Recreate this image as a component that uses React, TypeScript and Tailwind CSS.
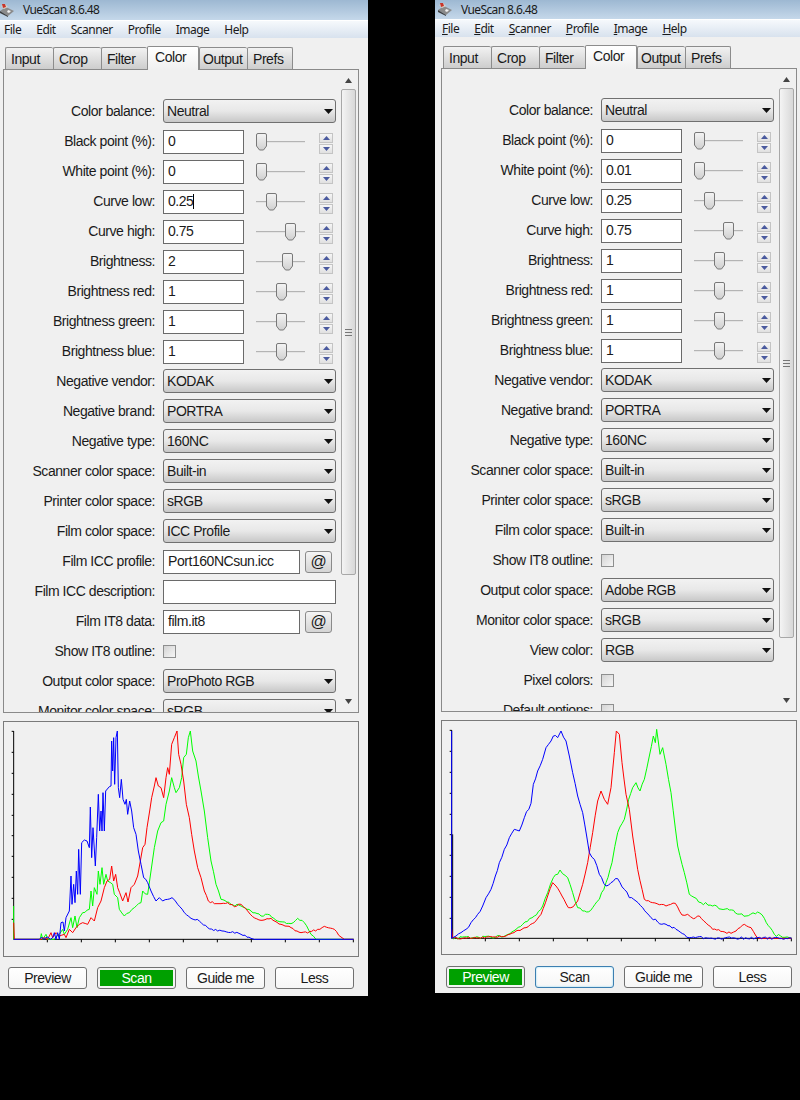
import React from 'react';

type Row =
  | { label: string; kind: 'select'; value: string }
  | { label: string; kind: 'num'; value: string; pos: number; caret?: boolean }
  | { label: string; kind: 'file'; value: string }
  | { label: string; kind: 'wide'; value: string }
  | { label: string; kind: 'check' };

const leftRows: Row[] = [
  { label: 'Color balance:', kind: 'select', value: 'Neutral' },
  { label: 'Black point (%):', kind: 'num', value: '0', pos: 5 },
  { label: 'White point (%):', kind: 'num', value: '0', pos: 5 },
  { label: 'Curve low:', kind: 'num', value: '0.25', pos: 15, caret: true },
  { label: 'Curve high:', kind: 'num', value: '0.75', pos: 34 },
  { label: 'Brightness:', kind: 'num', value: '2', pos: 31 },
  { label: 'Brightness red:', kind: 'num', value: '1', pos: 25 },
  { label: 'Brightness green:', kind: 'num', value: '1', pos: 25 },
  { label: 'Brightness blue:', kind: 'num', value: '1', pos: 25 },
  { label: 'Negative vendor:', kind: 'select', value: 'KODAK' },
  { label: 'Negative brand:', kind: 'select', value: 'PORTRA' },
  { label: 'Negative type:', kind: 'select', value: '160NC' },
  { label: 'Scanner color space:', kind: 'select', value: 'Built-in' },
  { label: 'Printer color space:', kind: 'select', value: 'sRGB' },
  { label: 'Film color space:', kind: 'select', value: 'ICC Profile' },
  { label: 'Film ICC profile:', kind: 'file', value: 'Port160NCsun.icc' },
  { label: 'Film ICC description:', kind: 'wide', value: '' },
  { label: 'Film IT8 data:', kind: 'file', value: 'film.it8' },
  { label: 'Show IT8 outline:', kind: 'check' },
  { label: 'Output color space:', kind: 'select', value: 'ProPhoto RGB' },
  { label: 'Monitor color space:', kind: 'select', value: 'sRGB' },
];

const rightRows: Row[] = [
  { label: 'Color balance:', kind: 'select', value: 'Neutral' },
  { label: 'Black point (%):', kind: 'num', value: '0', pos: 5 },
  { label: 'White point (%):', kind: 'num', value: '0.01', pos: 5 },
  { label: 'Curve low:', kind: 'num', value: '0.25', pos: 15 },
  { label: 'Curve high:', kind: 'num', value: '0.75', pos: 34 },
  { label: 'Brightness:', kind: 'num', value: '1', pos: 25 },
  { label: 'Brightness red:', kind: 'num', value: '1', pos: 25 },
  { label: 'Brightness green:', kind: 'num', value: '1', pos: 25 },
  { label: 'Brightness blue:', kind: 'num', value: '1', pos: 25 },
  { label: 'Negative vendor:', kind: 'select', value: 'KODAK' },
  { label: 'Negative brand:', kind: 'select', value: 'PORTRA' },
  { label: 'Negative type:', kind: 'select', value: '160NC' },
  { label: 'Scanner color space:', kind: 'select', value: 'Built-in' },
  { label: 'Printer color space:', kind: 'select', value: 'sRGB' },
  { label: 'Film color space:', kind: 'select', value: 'Built-in' },
  { label: 'Show IT8 outline:', kind: 'check' },
  { label: 'Output color space:', kind: 'select', value: 'Adobe RGB' },
  { label: 'Monitor color space:', kind: 'select', value: 'sRGB' },
  { label: 'View color:', kind: 'select', value: 'RGB' },
  { label: 'Pixel colors:', kind: 'check' },
  { label: 'Default options:', kind: 'check' },
];

// histogram traces, in 3x coordinates of the window
const leftBlue = '38,655 115,655 122,648 128,655 140,648 148,655 155,650 160,635 165,655 170,635 175,655 180,605 186,603 190,630 195,590 205,570 210,465 213,550 218,490 222,545 226,450 230,520 233,385 238,520 242,365 250,357 258,360 265,380 268,258 272,410 276,320 283,435 287,350 292,220 296,330 300,270 303,330 306,215 310,330 314,210 325,197 330,195 332,60 335,150 338,50 341,190 345,50 349,30 352,200 356,230 361,175 366,235 372,250 376,235 380,280 386,240 392,270 398,320 405,340 412,390 420,430 428,470 440,485 450,510 465,540 475,530 485,540 500,535 513,530 530,550 550,575 570,592 595,600 620,620 650,630 695,632 720,640 750,652 760,655 1058,655';
const leftRed = '38,605 40,655 120,655 130,650 140,655 150,635 155,650 165,635 175,645 190,640 195,650 205,625 215,635 225,620 235,610 245,605 260,610 270,590 280,600 290,560 300,540 310,500 318,480 326,475 332,435 338,480 344,460 350,500 356,515 365,540 375,515 381,543 390,500 400,490 410,465 418,420 425,380 432,370 438,320 446,270 452,230 460,195 465,170 472,195 480,200 488,230 495,170 500,140 505,160 512,70 520,50 528,30 533,100 540,130 548,180 556,250 565,290 572,340 580,390 590,440 600,470 610,510 622,540 640,548 660,548 680,545 700,557 720,550 740,570 755,587 780,598 810,592 840,610 870,620 900,635 920,636 950,625 970,616 1000,625 1020,648 1030,655 1058,655';
const leftGreen = '38,555 38,655 118,655 121,638 125,655 135,640 140,655 160,655 175,640 185,625 190,640 200,625 210,590 215,620 222,585 228,620 235,590 245,575 265,565 270,510 275,555 280,500 288,520 292,450 297,490 303,440 308,490 315,460 320,480 335,490 340,520 350,530 355,565 370,585 385,575 400,560 420,545 425,510 440,520 450,450 460,380 470,330 480,305 488,300 495,250 505,210 512,170 520,200 525,215 535,200 542,170 548,110 556,100 562,50 568,30 575,90 585,120 592,165 600,210 610,270 620,350 630,420 645,490 660,535 690,550 720,555 750,570 780,585 800,580 830,600 850,603 870,608 890,592 910,605 930,640 945,655 1058,655';

const rightBlue = '47,45 47,667 60,660 75,650 90,640 105,620 125,595 140,570 150,545 165,520 178,480 190,440 205,400 220,365 235,340 250,345 265,305 285,262 292,205 305,165 320,130 330,95 345,75 352,60 365,65 375,45 390,75 400,120 410,170 425,240 440,290 452,360 460,410 475,430 490,475 510,510 525,500 545,488 565,520 580,545 600,555 620,575 645,605 665,618 690,625 720,640 745,655 760,665 1067,667';
const rightRed = '47,640 50,667 170,663 210,660 240,645 270,635 295,620 315,595 335,540 350,500 360,510 378,540 397,575 412,572 425,555 440,505 455,440 470,350 485,255 495,225 505,250 515,265 525,215 535,110 541,45 550,55 558,140 570,235 580,280 590,360 605,460 625,550 650,560 690,570 718,562 738,597 755,595 772,608 790,600 830,640 885,652 900,645 925,625 945,635 960,660 972,667 1067,667';
const rightGreen = '47,667 110,665 165,664 210,658 240,640 260,625 295,600 320,570 335,530 352,485 365,475 372,462 395,485 410,530 425,575 440,585 452,588 470,575 490,550 510,500 528,440 545,350 565,310 578,250 590,215 600,200 612,225 625,190 640,120 652,60 658,80 662,40 672,115 680,95 690,145 705,230 725,390 745,470 760,535 795,560 830,570 880,582 930,600 965,588 985,607 1015,655 1040,664 1067,667';

// the real traces are noisy, roughen the hand-read points a little
function rough(points: string, amp: number): string {
  const pts = points.split(' ').map((p) => p.split(',').map(Number));
  const out: string[] = [];
  pts.forEach((p, i) => {
    out.push(`${p[0]},${p[1]}`);
    const q = pts[i + 1];
    if (!q || p[1] === q[1]) return;
    const n = Math.floor((q[0] - p[0]) / 6);
    for (let k = 1; k < n; k++) {
      const x = p[0] + ((q[0] - p[0]) * k) / n;
      const y = p[1] + ((q[1] - p[1]) * k) / n;
      const noise = Math.sin(x * 12.9898 + y * 0.2) * 43758.5453;
      out.push(`${x.toFixed(1)},${(y + (noise - Math.floor(noise) - 0.5) * amp).toFixed(1)}`);
    }
  });
  return out.join(' ');
}

const ticksY = [31, 94, 157, 220, 283, 344, 406, 469, 532, 595];
const ticksX = [139, 241, 343, 445, 547, 649, 751, 853, 955, 1057];

function Select({ value }: { value: string }) {
  return (
    <div className="flex-1 h-[24px] flex items-center justify-between pl-[3px] pr-[2px] border border-[#707070] rounded-[3px] bg-gradient-to-b from-[#f2f2f2] via-[#e8e8e8] to-[#c8c8c8]">
      <span>{value}</span>
      <svg width="9" height="5" viewBox="0 0 9 5"><path d="M0 0h9L4.500 5z" fill="#111" /></svg>
    </div>
  );
}

function TextBox({ value, width, caret }: { value: string; width: string; caret?: boolean }) {
  return (
    <div className={`h-[24px] mt-[2px] pb-[2px] bg-white border border-[#6a6a6a] pl-[4px] flex items-center ${width}`}>
      {value}
      {caret && <span className="w-px h-[15px] bg-black" />}
    </div>
  );
}

function Spinner() {
  return (
    <div className="w-[14px] mt-[4px] flex flex-col gap-px">
      <div className="h-[10px] flex items-center justify-center border border-[#c4c4c4] bg-gradient-to-b from-[#f6f6f6] to-[#e0e0e0]">
        <svg width="7" height="4" viewBox="0 0 7 4"><path d="M3.500 0L7 4H0z" fill="#4a5a9e" /></svg>
      </div>
      <div className="h-[10px] flex items-center justify-center border border-[#c4c4c4] bg-gradient-to-b from-[#f6f6f6] to-[#e0e0e0]">
        <svg width="7" height="4" viewBox="0 0 7 4"><path d="M0 0h7L3.500 4z" fill="#4a5a9e" /></svg>
      </div>
    </div>
  );
}

function Slider({ pos }: { pos: number }) {
  return (
    <div className="relative w-[49px] h-[20px] ml-[12px] mr-[14px]">
      <div className="absolute left-0 right-0 top-[10px] h-[2px] bg-[#b4b4b4] border-b border-[#e4e4e4]" />
      <svg className="absolute top-[2px]" style={{ left: pos - 5 }} width="11" height="18" viewBox="0 0 11 18">
        <defs>
          <linearGradient id="thumb" x1="0" y1="0" x2="0" y2="1">
            <stop offset="0" stopColor="#f4f4f4" />
            <stop offset="1" stopColor="#d0d0d0" />
          </linearGradient>
        </defs>
        <path d="M2 .5h7a1.500 1.500 0 0 1 1.500 1.500v11l-3 4h-4l-3-4v-11a1.500 1.500 0 0 1 1.500-1.500z" fill="url(#thumb)" stroke="#787878" />
      </svg>
    </div>
  );
}

function AtButton() {
  return (
    <div className="w-[27px] h-[22px] ml-[5px] mt-[2px] flex items-center justify-center border border-[#8a8a8a] rounded-[3px] bg-gradient-to-b from-[#f4f4f4] to-[#d4d4d4] text-[16px]">
      @
    </div>
  );
}

function Control({ row }: { row: Row }) {
  switch (row.kind) {
    case 'select':
      return <Select value={row.value} />;
    case 'num':
      return (
        <>
          <TextBox value={row.value} width="w-[81px]" caret={row.caret} />
          <Slider pos={row.pos} />
          <Spinner />
        </>
      );
    case 'file':
      return (
        <>
          <TextBox value={row.value} width="w-[137px]" />
          <AtButton />
        </>
      );
    case 'wide':
      return <TextBox value={row.value} width="flex-1" />;
    case 'check':
      return <div className="w-[13px] h-[13px] border border-[#8e8f8f] bg-gradient-to-br from-[#d4d4d4] to-[#f6f6f6]" />;
  }
}

function Histogram({ blue, red, green, right }: { blue: string; red: string; green: string; right: boolean }) {
  const baseY = right ? 667 : 655;
  const x0 = right ? 47 : 38;
  const ticks = right ? ticksY.map((y) => y + 12) : ticksY;
  return (
    <div className={`mt-[8px] ml-[3px] w-[356px] border border-[#7a7a7a] ${right ? 'h-[235px]' : 'h-[236px]'}`}>
      <svg className="block w-full h-full" viewBox={`${x0 - 29} ${baseY - 652} 1062 ${right ? 699 : 702}`} preserveAspectRatio="none">
        <g fill="none" stroke="#000" strokeWidth="3">
          <path d={`M${x0} ${baseY - 625}V${baseY}H${x0 + 1020}`} />
          {ticks.map((y) => <path key={y} d={`M${x0 - 6} ${y}h6`} />)}
          {ticksX.map((x) => <path key={x} d={`M${x + x0 - 38} ${baseY}v9`} />)}
          {right && <path d={`M${x0 + 3} 355V${baseY}`} />}
        </g>
        <g fill="none" strokeWidth="3" strokeLinejoin="round">
          <polyline points={rough(green, right ? 9 : 7)} stroke="#00ff00" />
          <polyline points={rough(red, right ? 6 : 7)} stroke="#ff0000" />
          <polyline points={rough(blue, right ? 9 : 6)} stroke="#0000ff" />
        </g>
      </svg>
    </div>
  );
}

function Btn({ label, green, focus }: { label: string; green?: boolean; focus?: boolean }) {
  if (green) {
    return (
      <div className="w-[79px] h-[22px] p-[2px] border border-[#707070] rounded-[3px] bg-[#f4f4f4]">
        <div className="h-full flex items-center justify-center bg-[#00a000] text-white">{label}</div>
      </div>
    );
  }
  return (
    <div className={`w-[79px] h-[22px] flex items-center justify-center rounded-[3px] border bg-gradient-to-b from-white to-[#f6f6f6] ${focus ? 'border-[#3c7fb1] shadow-[inset_0_0_2px_#7fd0f0]' : 'border-[#707070]'}`}>
      {label}
    </div>
  );
}

function Logo() {
  return (
    <svg width="15" height="15" viewBox="0 0 15 15" className="shrink-0">
      <path d="M0 8L6 4l8 4-6 5z" fill="#8b8b8b" />
      <path d="M0 8l8 5v1L0 10z" fill="#3d3d3d" />
      <path d="M1 3l4-2 3 3-4 2z" fill="#d8d4c8" />
      <path d="M2 1l3 0 1 3-3 1z" fill="#c8352a" />
      <path d="M8 7l3 1-2 2-2-1z" fill="#f2f2f2" />
    </svg>
  );
}

const menus = ['File', 'Edit', 'Scanner', 'Profile', 'Image', 'Help'];
const tabs = [
  { name: 'Input', cls: 'w-[48px] pl-[5px]' },
  { name: 'Crop', cls: 'w-[48px] pl-[5px]' },
  { name: 'Filter', cls: 'w-[46px] pl-[5px]' },
  { name: 'Color', cls: 'w-[52px] pl-[7px]' },
  { name: 'Output', cls: 'w-[48px] pl-[3px]' },
  { name: 'Prefs', cls: 'w-[46px] pl-[5px]' },
];

function VueWindow({ side }: { side: 'left' | 'right' }) {
  const right = side === 'right';
  const rows = right ? rightRows : leftRows;
  return (
    <div className={`overflow-hidden bg-[#f0f0f0] shrink-0 ${right ? 'w-[365px] h-[993px] ml-[67px]' : 'w-[368px] h-[996px]'}`}>
      <div className={`flex items-center gap-[8px] bg-gradient-to-b from-[#9db8d2] to-[#c5d8ea] font-['Noto_Sans',sans-serif] text-[12px] tracking-[-0.6px] text-[#1a1a1a] ${right ? 'pl-[3px] h-[19px]' : 'h-[20px]'}`}>
        <Logo />
        <span>VueScan 8.6.48</span>
      </div>
      <div className={`h-[18px] pt-[1px] flex items-center gap-[15px] font-['Noto_Sans',sans-serif] text-[12px] tracking-[-0.5px] border-t border-white bg-gradient-to-b from-[#f6f9fc] to-[#d8e2ee] ${right ? 'pl-[7px]' : 'pl-[4px]'}`}>
        {menus.map((m) => (
          <span key={m}>
            {right ? <><span className="underline">{m[0]}</span>{m.slice(1)}</> : m}
          </span>
        ))}
      </div>
      <div className={right ? 'w-[371px] pl-[3px]' : 'w-[368px]'}>
        <div className="flex items-end h-[31px] pl-[5px] relative z-10">
          {tabs.map((t) => (
            t.name === 'Color' ? (
              <div key={t.name} className={`${t.cls} h-[24px] pb-[2px] -mb-px flex items-center border border-b-0 border-[#8c8c8c] rounded-t-[2px] bg-gradient-to-b from-white to-[#f0f0f0]`}>{t.name}</div>
            ) : (
              <div key={t.name} className={`${t.cls} h-[22px] pt-[1px] flex items-center border border-[#8c8c8c] border-b-0 border-r-0 last:border-r rounded-t-[2px] bg-gradient-to-b from-[#f2f2f2] to-[#cdcdcd]`}>{t.name}</div>
            )
          ))}
        </div>
        <div className="ml-[3px] w-[356px] h-[644px] border border-[#8a8a8a] flex overflow-hidden">
          <div className="flex-1 pt-[26px] pr-[2px] overflow-hidden">
            {rows.map((r) => (
              <div key={r.label} className="h-[30px] flex items-center">
                <div className="w-[159px] text-right pr-[8px] whitespace-nowrap">{r.label}</div>
                <div className="flex-1 flex items-center min-w-0"><Control row={r} /></div>
              </div>
            ))}
          </div>
          <div className="w-[20px] flex flex-col items-center relative">
            <svg className="mt-[8px] shrink-0" width="9" height="5" viewBox="0 0 9 5"><path d="M4.500 0L8 5H1z" fill="#444" /></svg>
            <div className={`mt-[6px] w-[15px] flex items-center justify-center border border-[#a8a8a8] rounded-[2px] bg-gradient-to-r from-[#f4f4f4] to-[#d8d8d8] ${right ? 'h-[550px]' : 'h-[486px]'}`}>
              <div className="w-[7px] h-[7px] border-y border-[#777] flex items-center"><div className="w-full h-px bg-[#777]" /></div>
            </div>
            <svg className="absolute bottom-[8px]" width="9" height="5" viewBox="0 0 9 5"><path d="M1 0h7L4.500 5z" fill="#444" /></svg>
          </div>
        </div>
        {right ? (
          <Histogram blue={rightBlue} red={rightRed} green={rightGreen} right />
        ) : (
          <Histogram blue={leftBlue} red={leftRed} green={leftGreen} right={false} />
        )}
        <div className={`flex gap-[10px] ml-[8px] ${right ? 'mt-[11px]' : 'mt-[10px]'}`}>
          <Btn label="Preview" green={right} />
          <Btn label="Scan" green={!right} focus={right} />
          <Btn label="Guide me" />
          <Btn label="Less" />
        </div>
      </div>
    </div>
  );
}

export default function App() {
  return (
    <div className="w-[800px] h-[1100px] bg-black flex items-start overflow-hidden font-['Liberation_Sans',Arial,sans-serif] text-[14px] tracking-[-0.45px] text-[#1a1a1a]">
      <VueWindow side="left" />
      <VueWindow side="right" />
    </div>
  );
}
